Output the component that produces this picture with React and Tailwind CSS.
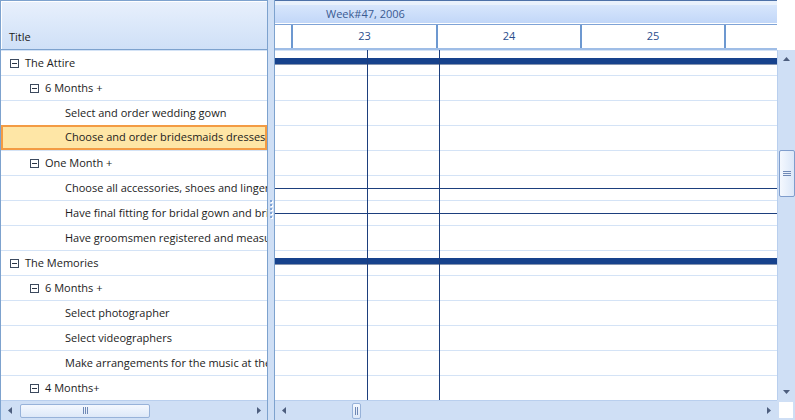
const rows = [
  { level: 0, text: "The Attire", toggle: true, bar: true },
  { level: 1, text: "6 Months +", toggle: true },
  { level: 2, text: "Select and order wedding gown" },
  { level: 2, text: "Choose and order bridesmaids dresses", selected: true },
  { level: 1, text: "One Month +", toggle: true },
  { level: 2, text: "Choose all accessories, shoes and lingerie", line: true },
  { level: 2, text: "Have final fitting for bridal gown and bridesmaids dresses", line: true },
  { level: 2, text: "Have groomsmen registered and measured for tuxedos" },
  { level: 0, text: "The Memories", toggle: true, bar: true },
  { level: 1, text: "6 Months +", toggle: true },
  { level: 2, text: "Select photographer" },
  { level: 2, text: "Select videographers" },
  { level: 2, text: "Make arrangements for the music at the ceremony" },
  { level: 1, text: "4 Months+", toggle: true },
];

const indent = ["pl-[9px]", "pl-[29px]", "pl-[49px]"];

// small triangle used by all scroll buttons
const Arrow = ({ dir }) => {
  const pts = {
    up: "0,4 7,4 3.5,0",
    down: "0,0 7,0 3.5,4",
    left: "4,0 4,7 0,3.5",
    right: "0,0 0,7 4,3.5",
  }[dir];
  const vertical = dir === "up" || dir === "down";
  return (
    <svg width={vertical ? 7 : 4} height={vertical ? 4 : 7}>
      <polygon points={pts} fill="#4d5e7e" />
    </svg>
  );
};

const MinusBox = () => (
  <span className="w-[9px] h-[9px] border border-[#3c4a5e] flex items-center justify-center shrink-0 bg-white">
    <span className="w-[5px] h-px bg-[#2b3444]" />
  </span>
);

const TreeRow = ({ row }) => (
  <div
    className={
      "h-[25px] flex items-center whitespace-nowrap overflow-hidden " +
      indent[row.level] +
      (row.selected
        ? " bg-[#fee6a6] shadow-[inset_0_0_0_2px_#f39b44]"
        : " border-t border-[#d4e3f6]")
    }
  >
    {row.toggle ? <MinusBox /> : <span className="w-[9px] shrink-0" />}
    <span className="ml-[6px] text-[#1c1c1c]">{row.text}</span>
  </div>
);

const GanttRow = ({ row }) => (
  <div className="h-[25px] flex flex-col border-t border-[#d4e3f6]">
    {row.bar && <div className="mt-[7px] h-[7px] bg-[#17428c] border-b border-[#8594b0]" />}
    {row.line && <div className="mt-[12px] h-px bg-[#1d3f7d]" />}
  </div>
);

export default function App() {
  return (
    <div className="w-[795px] h-[420px] flex bg-white overflow-hidden font-['Open_Sans',sans-serif] text-[11px]">
      {/* tree side */}
      <div className="w-[268px] flex flex-col border-l border-r border-[#7da2ce]">
        <div className="h-[50px] flex items-end pb-[4px] pl-[8px] border-t border-b border-[#7da2ce] bg-gradient-to-b from-[#e8f0fc] to-[#cfe0f7] shadow-[inset_1px_1px_0_#ffffff] text-[#1a1a1a]">
          Title
        </div>
        <div className="h-[350px] overflow-hidden">
          {rows.map((r, i) => (
            <TreeRow key={i} row={r} />
          ))}
        </div>
        <div className="h-[20px] flex items-center bg-[#cfdff5] border-t border-[#b9cfee]">
          <div className="w-[17px] flex justify-center">
            <Arrow dir="left" />
          </div>
          <div className="w-[130px] h-[14px] ml-[2px] rounded-[2px] border border-[#97b2d9] bg-gradient-to-b from-[#f4f8fe] to-[#dde8f8] flex items-center justify-center gap-[1px]">
            <span className="w-px h-[7px] bg-[#6f89b6]" />
            <span className="w-px h-[7px] bg-[#6f89b6]" />
            <span className="w-px h-[7px] bg-[#6f89b6]" />
          </div>
          <div className="flex-1" />
          <div className="w-[17px] flex justify-center">
            <Arrow dir="right" />
          </div>
        </div>
      </div>

      {/* splitter */}
      <div className="w-[6px] bg-[#cfdff5] flex flex-col items-center pt-[200px] gap-[2px]">
        {[0, 1, 2, 3, 4].map((i) => (
          <span key={i} className="w-[2px] h-[2px] bg-[#7fa3d6] shadow-[1px_1px_0_#ffffff]" />
        ))}
      </div>

      {/* gantt side */}
      <div className="w-[503px] flex flex-col border-l border-[#7da2ce]">
        <div className="h-[50px] flex flex-col border-t border-[#4d71a8]">
          <div className="h-[4px] bg-[#e9f1fc]" />
          <div className="h-[18px] leading-[18px] pl-[51px] bg-gradient-to-b from-[#d7e6fc] to-[#c2d7f8] text-[#3a5a92]">
            Week#47, 2006
          </div>
          <div className="h-px bg-white" />
          <div className="h-px bg-[#7fa3d6]" />
          <div className="h-[23px] flex bg-white text-[#2a4d8c]">
            <div className="w-[16px]" />
            <div className="w-[145px] border-l-2 border-[#6d98d0] flex items-center justify-center">23</div>
            <div className="w-[144px] border-l-2 border-[#6d98d0] flex items-center justify-center">24</div>
            <div className="w-[144px] border-l-2 border-[#6d98d0] flex items-center justify-center">25</div>
            <div className="flex-1 border-l-2 border-[#6d98d0]" />
          </div>
          <div className="h-[2px] bg-[#9fbde6]" />
        </div>
        <div className="h-[350px] relative overflow-hidden">
          {rows.map((r, i) => (
            <GanttRow key={i} row={r} />
          ))}
          <div className="absolute top-0 bottom-0 left-[92px] w-px bg-[#1d3f7d]" />
          <div className="absolute top-0 bottom-0 left-[164px] w-px bg-[#1d3f7d]" />
        </div>
        <div className="h-[20px] flex items-center bg-[#cfdff5] border-t border-[#b9cfee]">
          <div className="w-[17px] flex justify-center">
            <Arrow dir="left" />
          </div>
          <div className="w-[60px]" />
          <div className="w-[9px] h-[16px] rounded-[2px] border border-[#97b2d9] bg-gradient-to-b from-[#f4f8fe] to-[#dde8f8] flex items-center justify-center gap-[1px]">
            <span className="w-px h-[8px] bg-[#6f89b6]" />
            <span className="w-px h-[8px] bg-[#6f89b6]" />
          </div>
          <div className="flex-1" />
          <div className="w-[17px] flex justify-center">
            <Arrow dir="right" />
          </div>
        </div>
      </div>

      {/* vertical scrollbar column */}
      <div className="w-[18px] flex flex-col">
        <div className="h-[50px] bg-white" />
        <div className="h-[350px] flex flex-col items-center bg-[#cfdff5] border-l border-[#b9cfee]">
          <div className="h-[17px] flex items-center">
            <Arrow dir="up" />
          </div>
          <div className="h-[83px]" />
          <div className="w-[16px] h-[47px] rounded-[2px] border border-[#7f9dcc] bg-gradient-to-r from-[#f4f8fe] to-[#dbe7f8] flex flex-col items-center justify-center gap-[1px]">
            <span className="w-[8px] h-px bg-[#6f89b6]" />
            <span className="w-[8px] h-px bg-[#6f89b6]" />
            <span className="w-[8px] h-px bg-[#6f89b6]" />
          </div>
          <div className="flex-1" />
          <div className="h-[17px] flex items-center">
            <Arrow dir="down" />
          </div>
        </div>
        <div className="h-[20px] bg-[#cfdff5] p-[2px]">
          <div className="w-full h-full bg-white" />
        </div>
      </div>
    </div>
  );
}
